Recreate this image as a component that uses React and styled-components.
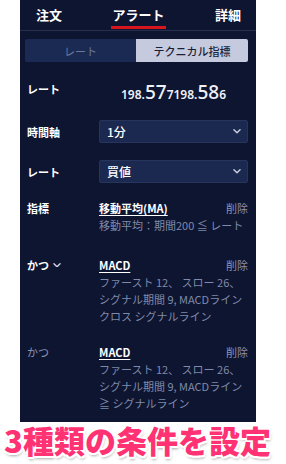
import React from "react";
import styled, { createGlobalStyle } from "styled-components";

const GlobalStyle = createGlobalStyle`
  html, body { margin: 0; padding: 0; background: #ffffff; }
  body { font-family: "Noto Sans CJK JP", "Noto Sans", sans-serif; }
  * { box-sizing: border-box; }
`;

const Page = styled.div`
  position: relative;
  width: 286px;
  height: 464px;
  overflow: hidden;
  background: #ffffff;
`;

const Panel = styled.div`
  margin-left: 20px;
  width: 236px;
  height: 422px;
  background: #0e1531;
  overflow: hidden;
`;

const Tabs = styled.div`
  height: 31px;
  display: flex;
  justify-content: space-between;
  align-items: stretch;
  padding: 0 15px 0 16px;
  border-bottom: 1px solid #262f4e;
`;

const Tab = styled.div`
  position: relative;
  display: flex;
  align-items: center;
  padding-bottom: 1px;
  font-size: 13px;
  font-weight: 700;
  color: #ffffff;
  &::after {
    content: "";
    display: ${(p) => (p.$active ? "block" : "none")};
    position: absolute;
    left: -1px;
    right: -1px;
    bottom: 1px;
    height: 3px;
    background: #d8141c;
  }
`;

const Segment = styled.div`
  margin: 8px 8px 0 5px;
  height: 23px;
  display: grid;
  grid-template-columns: 111px 1fr;
  border-radius: 2px;
  overflow: hidden;
`;

const SegButton = styled.div`
  display: flex;
  align-items: center;
  justify-content: center;
  font-size: 11px;
  font-weight: ${(p) => (p.$active ? 500 : 400)};
  color: ${(p) => (p.$active ? "#1a1f36" : "#6c789c")};
  background: ${(p) => (p.$active ? "#c5cade" : "#1b2a52")};
`;

const FormRow = styled.div`
  display: grid;
  grid-template-columns: 72px 1fr;
  align-items: ${(p) => p.$align || "center"};
  padding: 0 8px 0 7px;
  margin-top: ${(p) => p.$top}px;
`;

const Label = styled.div`
  font-size: 11px;
  font-weight: ${(p) => (p.$muted ? 400 : 700)};
  color: ${(p) => (p.$muted ? "#8a93b3" : "#ffffff")};
  line-height: 18px;
  display: flex;
  align-items: center;
  gap: 4px;
`;

const RateValue = styled.div`
  text-align: center;
  line-height: 24px;
  color: #eef1f8;
  white-space: nowrap;
`;

const Small = styled.span`
  font-family: "Noto Sans", sans-serif;
  font-size: 12px;
  font-weight: 600;
`;

const Big = styled.span`
  font-family: "Noto Sans", sans-serif;
  font-size: 19px;
  font-weight: 500;
`;

const Select = styled.div`
  height: 23px;
  display: flex;
  align-items: center;
  justify-content: space-between;
  padding: 0 6px 0 7px;
  background: #1b2950;
  border: 1px solid #27355c;
  border-radius: 2px;
  font-size: 12px;
  font-weight: 500;
  color: #ffffff;
`;

const Chevron = ({ color = "#c9cee0", w = 8 }) => (
  <svg width={w} height={w * 0.6} viewBox="0 0 10 6">
    <polyline
      points="1.2,1 5,4.8 8.8,1"
      fill="none"
      stroke={color}
      strokeWidth="1.8"
      strokeLinecap="round"
      strokeLinejoin="round"
    />
  </svg>
);

const Condition = styled.div`
  display: flex;
  flex-direction: column;
`;

const CondHead = styled.div`
  display: flex;
  justify-content: space-between;
  align-items: center;
  line-height: 18px;
`;

const CondTitle = styled.span`
  font-size: 11px;
  font-weight: 700;
  color: #ffffff;
  text-decoration: underline;
  text-decoration-thickness: 1px;
  text-underline-offset: 2px;
`;

const Delete = styled.span`
  font-size: 11px;
  color: #8a92ae;
`;

const DescLine = styled.div`
  font-size: 11px;
  line-height: 17px;
  color: #7f8aab;
  white-space: nowrap;
`;

const Banner = styled.div`
  position: absolute;
  left: 4px;
  top: 419px;
  font-family: "Noto Sans CJK JP", sans-serif;
  font-size: 31px;
  font-weight: 900;
  line-height: 42px;
  color: #ff3273;
  white-space: nowrap;
  text-shadow:
    2px 0 0 #fff, -2px 0 0 #fff, 0 2px 0 #fff, 0 -2px 0 #fff,
    1.5px 1.5px 0 #fff, -1.5px 1.5px 0 #fff, 1.5px -1.5px 0 #fff, -1.5px -1.5px 0 #fff,
    1px 3px 3px rgba(0, 0, 0, 0.35);
`;

const conditions = [
  {
    label: "指標",
    top: 16,
    title: "移動平均(MA)",
    lines: ["移動平均：期間200 ≦ レート"],
  },
  {
    label: "かつ",
    chevron: true,
    top: 22,
    title: "MACD",
    lines: ["ファースト 12、 スロー 26、", "シグナル期間 9, MACDライン", "クロス シグナルライン"],
  },
  {
    label: "かつ",
    muted: true,
    top: 18,
    title: "MACD",
    lines: ["ファースト 12、 スロー 26、", "シグナル期間 9, MACDライン", "≧ シグナルライン"],
  },
];

export default function App() {
  return (
    <>
      <GlobalStyle />
      <Page>
        <Panel>
          <Tabs>
            <Tab>注文</Tab>
            <Tab $active>アラート</Tab>
            <Tab>詳細</Tab>
          </Tabs>
          <Segment>
            <SegButton>レート</SegButton>
            <SegButton $active>テクニカル指標</SegButton>
          </Segment>

          <FormRow $top={18} $align="start">
            <Label>レート</Label>
            <RateValue>
              <Small>198.</Small>
              <Big>57</Big>
              <Small>7</Small>
              <Small>198.</Small>
              <Big>58</Big>
              <Small>6</Small>
            </RateValue>
          </FormRow>

          <FormRow $top={13}>
            <Label>時間軸</Label>
            <Select>
              <span>1分</span>
              <Chevron />
            </Select>
          </FormRow>

          <FormRow $top={17}>
            <Label>レート</Label>
            <Select>
              <span>買値</span>
              <Chevron />
            </Select>
          </FormRow>

          {conditions.map((c, i) => (
            <FormRow key={i} $top={c.top} $align="start">
              <Label $muted={c.muted}>
                {c.label}
                {c.chevron && <Chevron color="#c9cee0" w={8} />}
              </Label>
              <Condition>
                <CondHead>
                  <CondTitle>{c.title}</CondTitle>
                  <Delete>削除</Delete>
                </CondHead>
                {c.lines.map((l, j) => (
                  <DescLine key={j}>{l}</DescLine>
                ))}
              </Condition>
            </FormRow>
          ))}
        </Panel>
        <Banner>3種類の条件を設定</Banner>
      </Page>
    </>
  );
}
